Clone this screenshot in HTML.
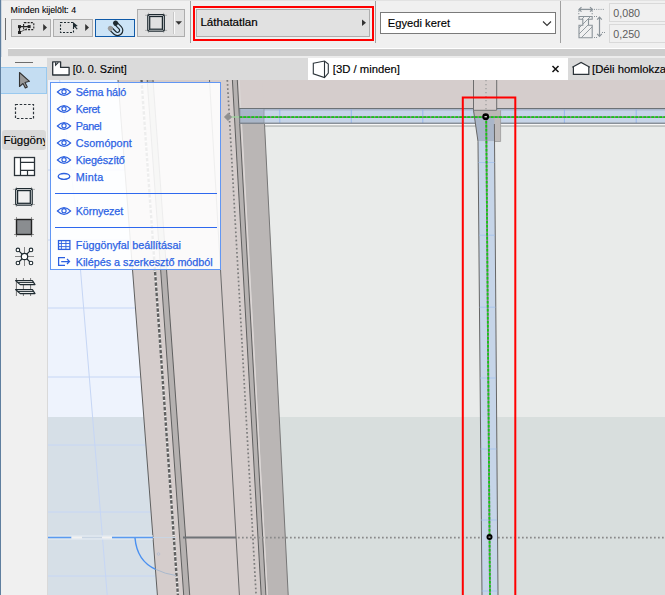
<!DOCTYPE html>
<html><head><meta charset="utf-8">
<style>
*{box-sizing:border-box;margin:0;padding:0}
html,body{width:665px;height:595px;overflow:hidden;background:#f0f0f0;font-family:"Liberation Sans",sans-serif;}
.a{position:absolute}
.btn{position:absolute;background:#e1e1e1;border:1px solid #adadad}
.sep{position:absolute;width:1px;background:#a0a0a0}
.txt{position:absolute;white-space:nowrap;color:#000;line-height:1}
.mi{position:absolute;left:75.8px;font-size:10.8px;letter-spacing:-0.15px;line-height:1;color:#2c62e4;white-space:nowrap;-webkit-text-stroke:0.25px #2c62e4}
svg{position:absolute;overflow:visible}
</style></head><body>
<!-- toolbar -->
<div class="a" style="left:1px;top:0;width:664px;height:1px;background:#e2e2e2"></div>
<div class="a" style="left:0;top:0;width:1px;height:595px;background:#5f7f9f"></div>
<div class="a" style="left:1px;top:0;width:1px;height:595px;background:#b4c4d4;opacity:0.5"></div>
<div class="txt" style="left:10.6px;top:5.8px;font-size:8.8px;color:#000;-webkit-text-stroke:0.1px #000">Minden kijelölt: 4</div>
<div class="sep" style="left:5px;top:18px;height:22px;background:#6d6d6d"></div>
<div class="btn" style="left:11px;top:19px;width:40px;height:18px"></div>
<div class="btn" style="left:53px;top:19px;width:40px;height:18px"></div>
<div class="btn" style="left:95px;top:19px;width:40px;height:18px;background:#cce4f7;border-color:#0f5aa8"></div>
<div class="btn" style="left:137px;top:9px;width:48px;height:28px"></div>

<div class="sep" style="left:190px;top:1px;height:42px"></div>
<div class="a" style="left:192.5px;top:5.5px;width:181px;height:35px;border:2px solid #f00"></div>
<div class="btn" style="left:196px;top:9px;width:174px;height:28px"></div>
<div class="txt" style="left:200.4px;top:16.4px;font-size:11.6px;color:#000;-webkit-text-stroke:0.2px #000">Láthatatlan</div>
<div class="sep" style="left:375px;top:1px;height:42px"></div>
<div class="a" style="left:380px;top:12px;width:176px;height:22px;background:#fff;border:1px solid #7a7a7a"></div>
<div class="txt" style="left:387.8px;top:17.6px;font-size:11.2px;color:#000;-webkit-text-stroke:0.15px #000">Egyedi keret</div>
<div class="sep" style="left:560px;top:1px;height:42px"></div>
<div class="a" style="left:609px;top:3px;width:70px;height:19px;border:1px solid #d9d9d9"></div>
<div class="a" style="left:609px;top:24px;width:70px;height:19px;border:1px solid #d9d9d9"></div>
<div class="txt" style="left:613.3px;top:8.3px;font-size:10.7px;color:#5d5d5d">0,080</div>
<div class="txt" style="left:613.3px;top:29.3px;font-size:10.7px;color:#5d5d5d">0,250</div>
<svg width="665" height="50" style="left:0;top:0">
 <defs><clipPath id="secclip"><path d="M579 16.5 H592.2 V19.3 H588.5 V25.2 H592.2 V37.7 H579 V25.2 H582.8 V19.3 H579 Z"/></clipPath></defs>
 <!-- btn1 icon -->
 <rect x="23.6" y="22.6" width="10.2" height="7" rx="0.8" fill="none" stroke="#222" stroke-width="1.1" stroke-dasharray="2,1.2"/>
 <path d="M19.5 26.6 H29 M19.5 26.6 V32.5" stroke="#222" stroke-width="1.3" fill="none"/>
 <path d="M19.5 32.5 L27 28.5" stroke="#444" stroke-width="0.8" fill="none"/>
 <rect x="18" y="25.1" width="3" height="3" fill="#222"/>
 <rect x="27.6" y="25.1" width="3" height="3" fill="#222"/>
 <rect x="18" y="31" width="3" height="3" fill="#222"/>
 <path d="M43.2 24 L47 27.5 L43.2 31 Z" fill="#333"/>
 <!-- btn2 icon -->
 <rect x="60.5" y="22.5" width="13" height="10" fill="none" stroke="#1e2a30" stroke-width="1.1" stroke-dasharray="2,1.5"/>
 <path d="M73 22 L73 28.5 L74.6 27 L76.8 29.5 L77.6 28.8 L75.6 26.4 L77.8 26 Z" fill="#1e2a30"/>
 <path d="M85.2 24 L89 27.5 L85.2 31 Z" fill="#333"/>
 <!-- btn3 magnet -->
 <g transform="translate(117.5,30.3) rotate(-45)">
  <path d="M-5.3 -6 V0 A5.3 5.3 0 0 0 5.3 0 V-6" fill="none" stroke="#1e2a30" stroke-width="1.2"/>
  <path d="M-2.1 -6 V0 A2.1 2.1 0 0 0 2.1 0 V-6" fill="none" stroke="#1e2a30" stroke-width="1.2"/>
  <circle cx="-3.7" cy="-6.4" r="2.6" fill="#9a9a9a"/>
  <circle cx="3.7" cy="-6.4" r="2.6" fill="#1e2a30"/>
 </g>
 <!-- btn4 frame -->
 <path d="M145.0 15.3h2.2 M164.89999999999998 15.3h2.2 M145.0 30.4h2.2 M164.89999999999998 30.4h2.2 M148.5 12.8v1.2 M163.59999999999997 12.8v1.2 M148.5 31.7v1.2 M163.59999999999997 31.7v1.2" stroke="#9a9a9a" stroke-width="0.7"/>
 <rect x="147.79999999999998" y="14.6" width="16.5" height="16.5" rx="1.2" fill="#fff" stroke="#1e2a30" stroke-width="1.25"/>
 <rect x="149.7" y="16.5" width="12.7" height="12.7" fill="#e1e1e1" stroke="#1e2a30" stroke-width="1.25"/>
 <path d="M148.0 14.8 L149.7 16.5 M164.09999999999997 14.8 L162.39999999999998 16.5 M148.0 30.9 L149.7 29.2 M164.09999999999997 30.9 L162.39999999999998 29.2" stroke="#1e2a30" stroke-width="1"/>
 <line x1="173.5" y1="12" x2="173.5" y2="34" stroke="#c8c8c8"/>
 <line x1="174.5" y1="12" x2="174.5" y2="34" stroke="#fafafa"/>
 <path d="M175.5 21.3 H182 L178.75 24.8 Z" fill="#333"/>
 <!-- lathatatlan arrow -->
 <path d="M362 19.5 L366 22.7 L362 26 Z" fill="#333"/>
 <!-- chevron -->
 <path d="M543 21.5 L547 25.5 L551 21.5" fill="none" stroke="#333" stroke-width="1.1"/>
 <!-- section icon -->
 <g stroke="#8a9399" fill="none">
  <path d="M579 9.4 H592.5" stroke-width="1.3"/>
  <path d="M581.5 7.2 L579 9.4 L581.5 11.6 M590 7.2 L592.5 9.4 L590 11.6" stroke-width="1.2"/>
  <path d="M578.8 10.5 V15.5 M592.2 10.5 V15.5" stroke-dasharray="1.3,1.2"/>
  <path d="M594 9.4 H605" stroke-dasharray="1,1.2"/>
  <path d="M579 16.5 H592.2 V19.3 H588.5 V25.2 H592.2 V37.7 H579 V25.2 H582.8 V19.3 H579 Z" stroke-width="1.1" fill="#f0f0f0"/>
  <g clip-path="url(#secclip)"><path d="M561 40 L585 16 M567 40 L591 16 M573 40 L597 16 M579 40 L603 16" stroke-width="0.9"/></g>
  <path d="M599.5 17.5 V36" stroke-width="1.2"/>
  <path d="M597.2 19.6 L599.5 17.2 L601.8 19.6 M597.2 33.9 L599.5 36.3 L601.8 33.9" stroke-width="1.2"/>
  <path d="M594 16.5 H598 M594 37.5 H598 M602 32.5 H605" stroke-dasharray="1,1"/>
 </g>
</svg>
<!-- grey bar -->
<div class="a" style="left:8px;top:48px;width:657px;height:1px;background:#fff"></div>
<div class="a" style="left:8px;top:49px;width:657px;height:7px;background:#cdcdcd"></div>
<!-- tab row -->
<div class="a" style="left:8px;top:56px;width:657px;height:2px;background:#ececec"></div>
<div class="a" style="left:47px;top:58px;width:618px;height:22px;background:#dadada"></div>
<div class="a" style="left:308px;top:58px;width:260px;height:22px;background:#fff"></div>
<div class="txt" style="left:72.7px;top:64px;font-size:10.8px;-webkit-text-stroke:0.15px #000">[0. 0. Szint]</div>
<div class="txt" style="left:332.8px;top:64px;font-size:11.3px;-webkit-text-stroke:0.15px #000">[3D / minden]</div>
<div class="txt" style="left:592px;top:64px;font-size:11.3px;-webkit-text-stroke:0.15px #000">[Déli homlokzat]</div>
<svg width="665" height="80" style="left:0;top:0">
 <path d="M52.7 61.8 H60.6 V67.4 H69.1 V75 H52.7 Z" fill="#fff" stroke="#2b3339" stroke-width="1.3" stroke-linejoin="round"/>
 <path d="M55.6 62.3 V65.2 L58.4 62.3" fill="none" stroke="#2b3339" stroke-width="1.1"/>
 <path d="M313.3 63.3 L324.5 61 L328.3 64 V73 L324.5 77.5 L313.3 73.8 Z M324.5 61 V77.5" fill="none" stroke="#2b3339" stroke-width="1.1"/>
 <path d="M552.5 66 L558.5 72 M558.5 66 L552.5 72" stroke="#111" stroke-width="1.5"/>
 <path d="M573.4 66.6 L581.1 62.5 L588.8 66.6 V74.4 H573.4 Z" fill="#fff"/><path d="M572.3 67.3 L581.1 62.5 L589.9 67.3 M573.4 66.6 V74.4 H588.8 V66.6" fill="none" stroke="#2b3339" stroke-width="1.2"/>
</svg>
<!-- left panel -->
<div class="a" style="left:1px;top:57px;width:46px;height:538px;background:#f0f0f0"></div>
<div class="a" style="left:15px;top:62px;width:18px;height:1px;background:#6d6d6d"></div>
<div class="a" style="left:1px;top:67px;width:46px;height:27px;background:#c4ddf2;border:1px solid #99c9ef;border-left:none"></div>
<div class="a" style="left:2px;top:130px;width:44px;height:20px;background:#d9d9d9;border-radius:3px"></div>
<div class="txt" style="left:3.4px;top:135px;font-size:11.5px;width:41.8px;overflow:hidden;-webkit-text-stroke:0.15px #000">Függöny</div>
<svg width="50" height="300" style="left:0;top:0">
 <path d="M19.5 72.5 L29.5 81.3 L25 82.5 L27.3 87 L25.3 88 L23 83.5 L19.5 86.5 Z" fill="#999" stroke="#333" stroke-width="1.1" stroke-linejoin="round"/>
 <rect x="15.5" y="104.5" width="18" height="14" fill="none" stroke="#2b3339" stroke-width="1.2" stroke-dasharray="2.5,1.7"/>
 <!-- curtain wall -->
 <rect x="14.5" y="157.5" width="20" height="18" fill="#fff" stroke="#2b3339" stroke-width="1.3"/>
 <path d="M20.5 157.5 V175.5 M20.5 162.3 H34.5 M20.5 170.3 H34.5 M27.5 170.3 V175.5" stroke="#2b3339" stroke-width="1.2"/>
 <!-- frame -->
 <path d="M12.899999999999999 189.4h2.2 M32.8 189.4h2.2 M12.899999999999999 204.49999999999997h2.2 M32.8 204.49999999999997h2.2 M16.4 186.9v1.2 M31.499999999999996 186.9v1.2 M16.4 205.79999999999998v1.2 M31.499999999999996 205.79999999999998v1.2" stroke="#9a9a9a" stroke-width="0.7"/>
 <rect x="15.7" y="188.7" width="16.5" height="16.5" rx="1.2" fill="#fff" stroke="#1e2a30" stroke-width="1.25"/>
 <rect x="17.6" y="190.6" width="12.7" height="12.7" fill="#f0f0f0" stroke="#1e2a30" stroke-width="1.25"/>
 <path d="M15.9 188.9 L17.6 190.6 M31.999999999999996 188.9 L30.299999999999997 190.6 M15.9 204.99999999999997 L17.6 203.29999999999998 M31.999999999999996 204.99999999999997 L30.299999999999997 203.29999999999998" stroke="#1e2a30" stroke-width="1"/>
 <!-- filled square -->
 <rect x="16.5" y="219.5" width="15" height="15" fill="#8a8d90" stroke="#222" stroke-width="1.4"/>
 <path d="M14 219.5h2.5 M31.5 219.5h2.5 M14 234.5h2.5 M31.5 234.5h2.5 M16.5 217v2.5 M31.5 217v2.5 M16.5 234.5v2.5 M31.5 234.5v2.5" stroke="#555" stroke-width="0.6"/>
 <!-- node -->
 <path d="M15 256.5 H34 M24.5 247 V266" stroke="#6a6a6a" stroke-width="0.8"/>
 <path d="M17.9 249.9 L31 263 M31 249.9 L17.9 263" stroke="#1e2a30" stroke-width="1.2"/>
 <circle cx="24.5" cy="256.5" r="3.2" fill="#fff" stroke="#1e2a30" stroke-width="1.2"/>
 <circle cx="17.9" cy="249.9" r="1.8" fill="#fff" stroke="#1e2a30" stroke-width="1.1"/>
 <circle cx="31" cy="249.9" r="1.8" fill="#fff" stroke="#1e2a30" stroke-width="1.1"/>
 <circle cx="17.9" cy="263" r="1.8" fill="#fff" stroke="#1e2a30" stroke-width="1.1"/>
 <circle cx="31" cy="263" r="1.8" fill="#fff" stroke="#1e2a30" stroke-width="1.1"/>
 <!-- stair-like -->
 <path d="M16.4 278 V296 M23.4 278 V296 M30.6 278 V296" stroke="#555" stroke-width="0.8"/>
 <path d="M15.6 280.6 H32.4 L35 284.6 H20.2 Z" fill="#fff" stroke="#1e2a30" stroke-width="1.2" stroke-linejoin="round"/><path d="M17.6 282.6 H33.4" stroke="#1e2a30" stroke-width="1"/>
 <path d="M15.6 289.6 H32.4 L35 293.6 H20.2 Z" fill="#fff" stroke="#1e2a30" stroke-width="1.2" stroke-linejoin="round"/><path d="M17.6 291.6 H33.4" stroke="#1e2a30" stroke-width="1"/>
</svg>

<!-- 3D view -->
<svg width="665" height="595" style="left:0;top:0">
 <defs><clipPath id="vp"><rect x="47" y="80" width="618" height="515"/></clipPath></defs>
 <g clip-path="url(#vp)">
  <rect x="47" y="80" width="618" height="337" fill="#eef3fd"/>
  <rect x="47" y="417" width="618" height="178" fill="#d6dfe7"/>
  <rect x="230" y="80" width="435" height="44" fill="#d5cdcc"/>
  <rect x="262" y="124" width="403" height="293" fill="#e9ebea"/>
  <rect x="262" y="417" width="403" height="178" fill="#d8dedd"/>
  <rect x="264.5" y="124" width="403" height="1.3" fill="#f7f7f7"/>
  <rect x="264.5" y="125.3" width="403" height="1.5" fill="#b9bcbb"/>
  <g stroke="#c6d6f5" stroke-width="1" fill="none">
   <path d="M47 308 H140 M47 377 H145 M47 445 H150 M47 512 H155 M47 576 H160 M47 240 H135 M47 170 H130 M79.7 260 L107.2 595 M77 220 L59.6 80"/>
  </g>
  <polygon points="118,80 262.3,80 288.2,595 157.4,595" fill="#d5cdcc"/>
  <polygon points="147.2,80 153,80 189.7,595 183.7,595" fill="#b5b1b0"/>
  <polygon points="232.4,80 237.3,80 265.9,595 261.2,595" fill="#b6b2b1"/>
  <polygon points="241.8,124 264.5,124 288.2,595 267.9,595" fill="#bab6b5"/>
  <g stroke="#5f5f5f" stroke-width="1" fill="none">
   <path d="M118 80 L157.4 595"/>
   <path d="M147.2 80 L183.7 595 M153 80 L189.7 595"/>
   <path d="M209.5 80 L239.4 595" stroke="#6a6a6a"/>
   <path d="M232.4 80 L261.2 595 M237.3 80 L265.9 595"/>
   <path d="M239.2 80 L267.4 595" stroke="#dcd8d7"/>
   <path d="M264.5 124 L288.2 595" stroke="#777"/>
  </g>
  <path d="M141.5 80 L177.9 595" stroke="#f2f2f2" stroke-width="2"/>
  <path d="M141.5 80 L177.9 595" stroke="#606060" stroke-width="2.4" stroke-dasharray="3.6,1.6"/>
  <path d="M227.3 80 L256.1 595" stroke="#7d7d7d" stroke-width="1.7" stroke-dasharray="1.7,2.4"/>
  <!-- horizontal at 537 -->
  <path d="M238 537.6 H665" stroke="#8a8a8a" stroke-width="1.7" stroke-dasharray="1.7,2.3"/>
  <path d="M183 537.5 H236" stroke="#6f7377" stroke-width="2"/>
  <path d="M47 536 H153 M47 539 H153" stroke="#e6edf5" stroke-width="1"/>
  <path d="M47 537.5 H71.5 M112 537.5 H153" stroke="#5a9af0" stroke-width="1.3"/>
  <path d="M82 537.5 H102 M153 537.5 H176" stroke="#c9d5e3" stroke-width="1"/>
  <path d="M71.5 537.5 H82 M102 537.5 H112" stroke="#f2f2f2" stroke-width="1.8"/>
  <path d="M135 538 Q137 561 155.6 569.3" stroke="#4a90f0" stroke-width="1.4" fill="none"/>
  <path d="M155.6 569.3 Q165 574 176 575.5" stroke="#a9b9cc" stroke-width="1" fill="none"/>
  <circle cx="158.5" cy="554" r="1.3" fill="none" stroke="#a6b8d6" stroke-width="0.6"/>
 </g>
 <!-- beam -->
 <rect x="239.4" y="108" width="426" height="16" fill="#c7d5e8"/>
 <rect x="239.4" y="108" width="24.5" height="16" fill="#a9b6c8"/>
 <rect x="239.4" y="109" width="426" height="1.5" fill="#aab8cc"/>
 <path d="M279.8 109.5 V123 M351.3 109.5 V123 M422.8 109.5 V123 M564.4 109.5 V123 M636.2 109.5 V123" stroke="#8cb0ee" stroke-width="0.8"/>
 <line x1="264" y1="109" x2="264" y2="123" stroke="#8d96a2" stroke-width="0.8"/>
 <line x1="239" y1="108.5" x2="665" y2="108.5" stroke="#6d7276"/>
 <line x1="239" y1="123.2" x2="665" y2="123.2" stroke="#6d7276"/>
 <line x1="230" y1="117" x2="239.4" y2="117" stroke="#9fcf9f" stroke-width="1.5"/>
 <line x1="239.4" y1="117.1" x2="665" y2="117.1" stroke="#808080" stroke-width="1.8"/>
 <line x1="239.4" y1="117.1" x2="665" y2="117.1" stroke="#11cc11" stroke-width="1.8" stroke-dasharray="2.6,1.4"/>
 <path d="M228 113.2 L231.8 117 L228 120.8 L224.2 117 Z" fill="#8f8f8f" stroke="#9a9a9a" stroke-width="0.6" stroke-linejoin="round"/>
 <path d="M239.7 108.5 V123.2" stroke="#6d7276" stroke-width="1"/>
 <!-- mullion -->
 <rect x="473.5" y="80" width="23.2" height="30.3" fill="#d5cdcc"/>
 <path d="M473.5 80 V110.3 M496.7 80 V110.3" stroke="#6d6d6d" stroke-width="1"/>
 <line x1="486" y1="80" x2="486" y2="110" stroke="#999" stroke-width="1.2" stroke-dasharray="1.2,2.8"/>
 <polygon points="473.5,110.3 496.7,110.3 494.4,141.5 478,141.5" fill="#aab6c8"/>
 <rect x="494.4" y="110.3" width="6.2" height="31.2" fill="#c0bcbb"/>
 <polygon points="473.5,110.3 500.6,110.3 500.6,117 474.5,117" fill="#bdb7b6"/>
 <path d="M474.5 117 H500.6" stroke="#8a8a8a" stroke-width="0.8"/>
 <path d="M500.6 110.3 V141.5 H494.4" stroke="#9a9a9a" stroke-width="0.8" fill="none"/>
 <line x1="473.5" y1="117.1" x2="501" y2="117.1" stroke="#808080" stroke-width="1.8"/>
 <line x1="473.5" y1="117.1" x2="501" y2="117.1" stroke="#11cc11" stroke-width="1.8" stroke-dasharray="2.6,1.4" stroke-dashoffset="2.6"/>
 <path d="M473.5 110.3 H496.7" stroke="#7a7a7a" stroke-width="1"/>
 <polygon points="478,141.5 494.4,141.5 498,595 482,595" fill="#c6d5e8"/>
 <path d="M473.5 110.3 L478 141.5 L482 595 M494.4 124 L498 595" stroke="#666" stroke-width="1" fill="none"/>
 <path d="M478.5 162.5 H494.5 M479 235.2 H495 M479.5 307.2 H495.5 M480 378 H496 M480.5 449 H496.5 M481 520 H497 M481.5 591 H497.5" stroke="#9fc0ee" stroke-width="0.7"/>
 <line x1="486.2" y1="117" x2="490" y2="595" stroke="#808080" stroke-width="1.8"/>
 <line x1="486.2" y1="117" x2="490" y2="595" stroke="#11cc11" stroke-width="1.8" stroke-dasharray="2.6,1.4"/>
 <circle cx="485.7" cy="116.7" r="3.4" fill="#000"/>
 <rect x="484.5" y="116" width="2.4" height="1.4" fill="#ccc"/>
 <circle cx="489.5" cy="537" r="3" fill="#000"/>
 <rect x="488.5" y="536.5" width="2" height="1.2" fill="#bbb"/>
 <!-- red rect -->
 <path d="M462.8 600 V97.5 H515.3 V600" fill="none" stroke="#f00" stroke-width="2"/>
</svg>

<div class="a" style="left:47px;top:80px;width:1px;height:515px;background:#d9d9d9"></div>
<!-- menu -->
<div class="a" style="left:50px;top:82px;width:171px;height:188px;background:rgba(255,255,255,0.89);border:1px solid #6196f4"></div>
<div class="a" style="left:55px;top:193px;width:162px;height:1px;background:#2e68ee"></div>
<div class="a" style="left:55px;top:227px;width:162px;height:1px;background:#2e68ee"></div>
<svg width="665" height="300" style="left:0;top:0">
 <g fill="none" stroke="#2c60e0" stroke-width="1.15">
  <path d="M57.4 92.0 Q64 85.2 70.6 92.0 Q64 98.6 57.4 92.0 Z"/><circle cx="64" cy="91.7" r="2.1"/>
  <path d="M57.4 109.0 Q64 102.2 70.6 109.0 Q64 115.6 57.4 109.0 Z"/><circle cx="64" cy="108.7" r="2.1"/>
  <path d="M57.4 126.0 Q64 119.2 70.6 126.0 Q64 132.6 57.4 126.0 Z"/><circle cx="64" cy="125.7" r="2.1"/>
  <path d="M57.4 143.0 Q64 136.2 70.6 143.0 Q64 149.6 57.4 143.0 Z"/><circle cx="64" cy="142.7" r="2.1"/>
  <path d="M57.4 160.0 Q64 153.2 70.6 160.0 Q64 166.6 57.4 160.0 Z"/><circle cx="64" cy="159.7" r="2.1"/>
  <path d="M57.4 211.0 Q64 204.2 70.6 211.0 Q64 217.6 57.4 211.0 Z"/><circle cx="64" cy="210.7" r="2.1"/>
  <ellipse cx="64" cy="176.4" rx="5.8" ry="2.9" stroke-width="1.3"/>
  <path d="M58.8 177.8 Q64 181.2 69.2 177.8" stroke-width="1.1"/>
  <rect x="58.5" y="240.6" width="11.4" height="8.8" stroke-width="1.3"/>
  <path d="M61.4 240.6 V249.4 M65.9 240.6 V249.4 M58.5 243.5 H69.9 M58.5 246.6 H69.9" stroke-width="0.9"/>
  <path d="M65 257.6 H58.6 V265.4 H65 M61.2 261.5 H69.5 M67 259 L69.5 261.5 L67 264" stroke-width="1.25"/>
 </g>
</svg>
<div class="mi" style="top:86.7px;letter-spacing:-0.15px">Séma háló</div>
<div class="mi" style="top:103.7px;letter-spacing:-0.4px">Keret</div>
<div class="mi" style="top:120.7px;letter-spacing:-0.42px">Panel</div>
<div class="mi" style="top:137.7px;letter-spacing:0.1px">Csomópont</div>
<div class="mi" style="top:154.7px;letter-spacing:-0.15px">Kiegészítő</div>
<div class="mi" style="top:171.7px;letter-spacing:0.27px">Minta</div>
<div class="mi" style="top:205.7px;letter-spacing:-0.15px">Környezet</div>
<div class="mi" style="top:239.7px;letter-spacing:0px">Függönyfal beállításai</div>
<div class="mi" style="top:256.7px;letter-spacing:-0.02px">Kilépés a szerkesztő módból</div>
</body></html>
